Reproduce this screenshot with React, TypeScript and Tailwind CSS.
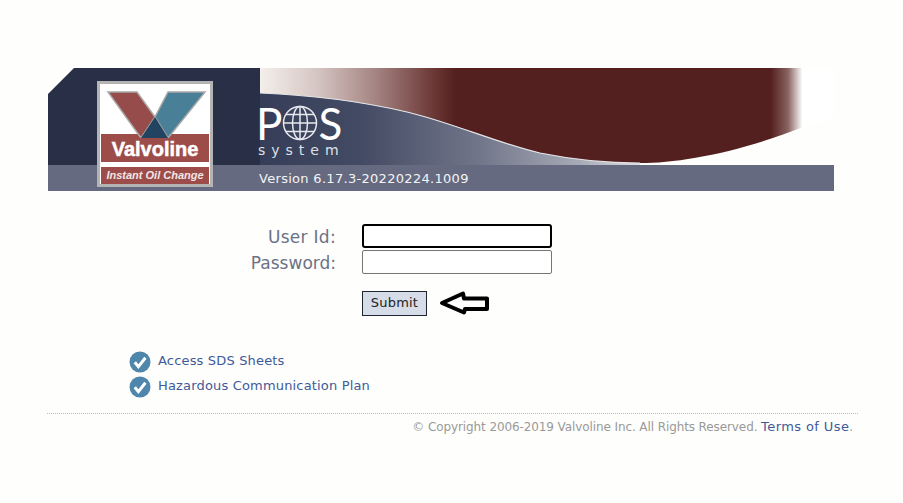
const font = "font-['DejaVu_Sans',Verdana,sans-serif]";

function BannerArt() {
  return (
    <svg width="574" height="97" viewBox="0 0 574 97" className="block">
      <defs>
        <linearGradient id="red" x1="0" y1="0" x2="574" y2="0" gradientUnits="userSpaceOnUse">
          <stop offset="0" stopColor="#f4efec" />
          <stop offset="0.1" stopColor="#d5c5c2" />
          <stop offset="0.2" stopColor="#a58583" />
          <stop offset="0.3" stopColor="#6d3a38" />
          <stop offset="0.34" stopColor="#54201f" />
          <stop offset="0.89" stopColor="#54201f" />
          <stop offset="0.92" stopColor="#8a6362" />
          <stop offset="0.945" stopColor="#ffffff" />
        </linearGradient>
        <linearGradient id="navy" x1="0" y1="0" x2="400" y2="0" gradientUnits="userSpaceOnUse">
          <stop offset="0" stopColor="#363d58" />
          <stop offset="0.25" stopColor="#434a63" />
          <stop offset="0.55" stopColor="#71768a" />
          <stop offset="0.8" stopColor="#a7abb7" />
          <stop offset="1" stopColor="#f0f0f0" />
        </linearGradient>
      </defs>
      <path
        d="M0 0H574V50L543 59C480 84 420 95 380 95C350 95 320 93 280 85C240 76 190 54 147 44C100 33 50 27 0 25Z"
        fill="url(#red)"
      />
      <path
        d="M0 25C50 27 100 33 147 44C190 54 240 76 280 85C320 93 350 95 380 95V97H0Z"
        fill="url(#navy)"
      />
      <path
        d="M0 25C50 27 100 33 147 44C190 54 240 76 280 85C320 93 350 95 380 95"
        fill="none"
        stroke="#e4e4e6"
        strokeWidth="1.2"
      />
    </svg>
  );
}

function Logo() {
  return (
    <div className="w-[116px] h-[106px] border-[3px] border-[#b4b4b4] bg-white flex flex-col relative">
      <div className="mt-[50px] mx-[1px] h-[28px] bg-[#9c4c49] flex items-center justify-center pt-[2px] text-white font-['Liberation_Sans',Arial,sans-serif] font-bold text-[20px] leading-none [-webkit-text-stroke:0.5px_#ffffff]">
        Valvoline
      </div>
      <div className="mt-[5px] mx-[1px] h-[17px] bg-[#9c4c49] flex items-center justify-center text-[#f2e6e6] font-['Liberation_Sans',Arial,sans-serif] font-bold italic text-[11px] leading-none whitespace-nowrap">
        Instant Oil Change
      </div>
      <svg width="110" height="54" viewBox="0 0 110 54" className="block absolute top-0 left-0">
        <path d="M8 8H37L55 33L41 54Z" fill="#964c4a" stroke="#a9a9a9" strokeWidth="1.5" />
        <path d="M68 8H105L68 54L55 33Z" fill="#4a7f98" stroke="#a9a9a9" strokeWidth="1.5" />
        <path d="M55 33L68 54H41Z" fill="#234461" />
      </svg>
    </div>
  );
}

function PosMark() {
  return (
    <div className="flex flex-col items-start text-white">
      <div className="flex items-center h-[36px] font-['Lato','Liberation_Sans',sans-serif] text-[44px] leading-[36px]">
        <span>P</span>
        <svg width="36" height="36" viewBox="0 0 36 36" className="shrink-0" fill="none" stroke="#e8e9ee" strokeWidth="1.5">
          <circle cx="18" cy="18" r="16.5" />
          <ellipse cx="18" cy="18" rx="7.5" ry="16.5" />
          <path d="M18 1.5V34.5M1.5 18H34.5M4 9.5H32M4 26.5H32" />
        </svg>
        <span>S</span>
      </div>
      <div className={`${font} text-[14px] leading-none tracking-[6px] mt-[2px] ml-[2px] text-[#dfe0e6]`}>system</div>
    </div>
  );
}

function CheckIcon() {
  return (
    <svg width="22" height="22" viewBox="0 0 22 22" className="shrink-0">
      <circle cx="11" cy="11" r="10.5" fill="#4f86ac" />
      <path d="M5.8 11.2L9.4 15.6L16.4 6.8" fill="none" stroke="#ffffff" strokeWidth="3" />
    </svg>
  );
}

export default function App() {
  return (
    <div className={`min-h-screen bg-[#fefefc] ${font}`}>
      <header className="pt-[68px] pl-[48px]">
        <div className="w-[786px] relative">
          <div className="flex h-[97px]">
            <div className="w-[212px] bg-[#282f47] [clip-path:polygon(26px_0,100%_0,100%_100%,0_100%,0_26px)]" />
            <BannerArt />
          </div>
          <div className="h-[26px] bg-[#656a80] pl-[211px] pt-[1px] flex items-center text-[13px] tracking-[0.3px] text-[#f4f4f6]">
            Version 6.17.3-20220224.1009
          </div>
          <div className="absolute left-[49px] top-[13px]">
            <Logo />
          </div>
          <div className="absolute left-[208px] top-[37px]">
            <PosMark />
          </div>
        </div>
      </header>

      <form className="mt-[33px] ml-[250px] w-[302px] text-[17px] text-[#6b7285]">
        <div className="flex items-center h-[24px]">
          <label className="w-[86px] pt-[4px] text-right tracking-[0.3px] whitespace-nowrap">User Id:</label>
          <input className="ml-[26px] w-[190px] h-[24px] bg-white border-2 border-black rounded-[3px] outline-none" />
        </div>
        <div className="flex items-center h-[24px] mt-[2px]">
          <label className="w-[86px] pt-[4px] text-right whitespace-nowrap">Password:</label>
          <input className="ml-[26px] w-[190px] h-[24px] bg-white border border-[#767676] rounded-[2px] outline-none" />
        </div>
        <div className="flex items-center mt-[16px] pl-[112px]">
          <button type="button" className="w-[65px] h-[25px] bg-[#d6dce8] border border-[#1f2533] text-[13px] tracking-[0.2px] text-[#222222]">
            Submit
          </button>
          <svg width="52" height="26" viewBox="0 0 52 26" className="ml-[12px] shrink-0">
            <path d="M3 13L24 3.5L25 8.5H48V19H26L25 22.5Z" fill="#ffffff" stroke="#000000" strokeWidth="4" strokeLinejoin="round" />
          </svg>
        </div>
      </form>

      <ul className="mt-[35px] ml-[129px] flex flex-col gap-[3px] text-[13px] tracking-[0.17px] text-[#3f5a99]">
        <li className="flex items-center gap-[7px] h-[22px]">
          <CheckIcon />
          <a className="-mt-[3px]">Access SDS Sheets</a>
        </li>
        <li className="flex items-center gap-[7px] h-[22px]">
          <CheckIcon />
          <a className="-mt-[3px]">Hazardous Communication Plan</a>
        </li>
      </ul>

      <footer className="mt-[15px] ml-[47px] w-[811px] border-t border-dotted border-[#b9b9b9] pt-[3px] pr-[5px] text-right text-[12px] tracking-[-0.1px] text-[#999999]">
        © Copyright 2006-2019 Valvoline Inc. All Rights Reserved. <a className="text-[13px] tracking-[0.4px] text-[#3f5a99]">Terms of Use</a>.
      </footer>
    </div>
  );
}
